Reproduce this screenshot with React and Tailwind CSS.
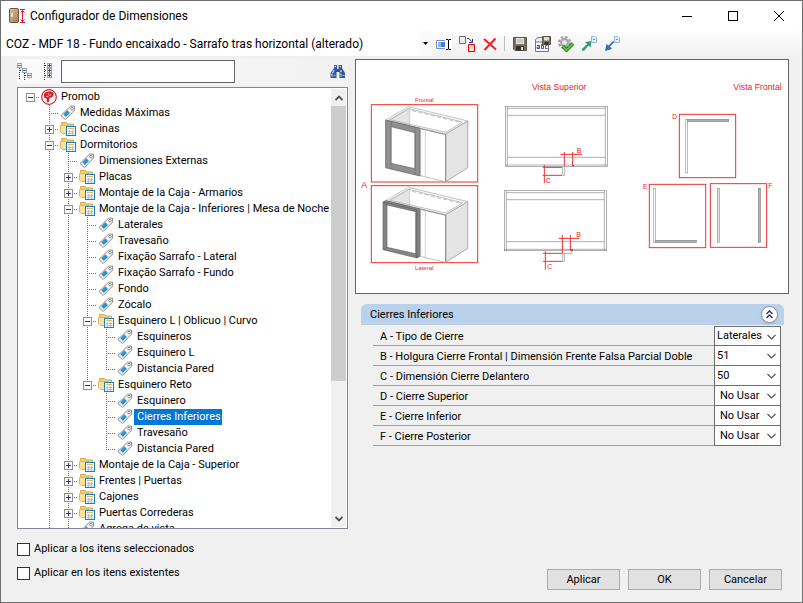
import React, { useState } from 'react'
import clsx from 'clsx'

const leaf = (label) => ({ label })
const folder = (label, children) => ({ label, children: children || [], open: !!children })

const tree = {
  label: 'Promob',
  logo: true,
  open: true,
  children: [
    leaf('Medidas Máximas'),
    folder('Cocinas'),
    folder('Dormitorios', [
      leaf('Dimensiones Externas'),
      folder('Placas'),
      folder('Montaje de la Caja - Armarios'),
      folder('Montaje de la Caja - Inferiores | Mesa de Noche', [
        leaf('Laterales'),
        leaf('Travesaño'),
        leaf('Fixação Sarrafo - Lateral'),
        leaf('Fixação Sarrafo - Fundo'),
        leaf('Fondo'),
        leaf('Zócalo'),
        folder('Esquinero L | Oblicuo | Curvo', [
          leaf('Esquineros'),
          leaf('Esquinero L'),
          leaf('Distancia Pared'),
        ]),
        folder('Esquinero Reto', [
          leaf('Esquinero'),
          leaf('Cierres Inferiores'),
          leaf('Travesaño'),
          leaf('Distancia Pared'),
        ]),
      ]),
      folder('Montaje de la Caja - Superior'),
      folder('Frentes | Puertas'),
      folder('Cajones'),
      folder('Puertas Correderas'),
      leaf('Agrega de vista'),
    ]),
    folder('Baños'),
  ],
}

const fields = [
  { id: 'a', label: 'A - Tipo de Cierre', value: 'Laterales', options: ['Laterales', 'Frontal'] },
  {
    id: 'b',
    label: 'B - Holgura Cierre Frontal | Dimensión Frente Falsa Parcial Doble',
    value: '51',
    options: ['50', '51'],
  },
  { id: 'c', label: 'C - Dimensión Cierre Delantero', value: '50', options: ['50', '51'] },
  { id: 'd', label: 'D - Cierre Superior', value: 'No Usar', options: ['No Usar', 'Usar'] },
  { id: 'e', label: 'E - Cierre Inferior', value: 'No Usar', options: ['No Usar', 'Usar'] },
  { id: 'f', label: 'F - Cierre Posterior', value: 'No Usar', options: ['No Usar', 'Usar'] },
]

// turns the tree into rows; guides says which levels have a line running through
function flatten(node, path = '0', guides = [], last = true) {
  const row = { node, path, guides, last }
  if (!node.open) return [row]
  return [
    row,
    ...node.children.flatMap((child, i) =>
      flatten(child, `${path}.${i}`, [...guides, !last], i === node.children.length - 1)
    ),
  ]
}

export default function App() {
  return (
    <div className="flex h-screen w-full flex-col overflow-hidden border border-[#6e6e6e] bg-[#f0f0f0] font-['Roboto',sans-serif] text-[11px] leading-4 text-black">
      <TitleBar />
      <Toolbar />
      <main className="grid min-h-0 flex-1 grid-cols-[331px_1fr] gap-[7px] pt-[3px] pr-[13px] pl-4">
        <TreePanel />
        <section className="flex min-w-0 flex-col gap-2.5">
          <div className="border border-[#646464] bg-white">
            <Diagram />
          </div>
          <Dimensions />
        </section>
      </main>
      <Footer />
    </div>
  )
}

function TitleBar() {
  return (
    <header className="flex h-[30px] shrink-0 items-center bg-white pl-[7px]">
      <AppIcon />
      <h1 className="ml-1 flex-1 text-[12px]">Configurador de Dimensiones</h1>
      <button aria-label="Minimizar" className="flex h-full w-[46px] items-center justify-center">
        <svg width="10" height="10" stroke="#000" fill="none" shapeRendering="crispEdges">
          <path d="M0 5.5H10" />
        </svg>
      </button>
      <button aria-label="Maximizar" className="flex h-full w-[46px] items-center justify-center">
        <svg width="10" height="10" stroke="#000" fill="none" shapeRendering="crispEdges">
          <path d="M.5 .5H9.5V9.5H.5Z" />
        </svg>
      </button>
      <button aria-label="Cerrar" className="flex h-full w-[46px] items-center justify-center">
        <svg width="10" height="10" stroke="#000" fill="none">
          <path d="M0 0L10 10M10 0L0 10" />
        </svg>
      </button>
    </header>
  )
}

function ToolButton({ label, children }) {
  return (
    <button aria-label={label} className="flex h-full w-[23px] items-center justify-center">
      <svg width="16" height="16" viewBox="0 0 16 16" fill="none">
        {children}
      </svg>
    </button>
  )
}

function Toolbar() {
  return (
    <div className="flex h-[25px] shrink-0 items-center rounded-r bg-linear-to-b from-[#fdfdfd] to-[#f1f1f1]">
      <div className="flex h-full w-[431px] items-center bg-white pl-[5px]">
        <select
          aria-label="Configuración"
          className="h-full min-w-0 flex-1 appearance-none bg-white text-[12px] outline-none"
        >
          <option>COZ - MDF 18 - Fundo encaixado - Sarrafo tras horizontal (alterado)</option>
        </select>
        <span className="flex h-full w-3 items-center justify-center bg-[#fafafa]">
          <svg width="6" height="3" fill="#000">
            <path d="M0 0H5L2.5 3Z" />
          </svg>
        </span>
      </div>
      <ToolButton label="Renombrar">
        <path d="M.5 4.5H12.5V12.5H.5Z" fill="#fff" stroke="#7292bd" />
        <path d="M2 6H9V11H2Z" fill="#3f7be0" />
        <path d="M2 6H5V11H2Z" fill="#8db4f5" />
        <path d="M9 3H16V14H9Z" fill="#fff" />
        <path d="M10 3.5H12L12.5 4L13 3.5H15M12.5 4V13M10 13.5H12L12.5 13L13 13.5H15" stroke="#000" />
      </ToolButton>
      <ToolButton label="Duplicar">
        <path d="M.5 .5H6.5V7.5H.5Z" fill="#eee" stroke="#7c6a6a" />
        <path d="M8 2.5H10L12.5 5.5M13.5 3V6.5H10" stroke="#1c2f7c" />
        <path d="M9.5 8.5H15.5V15.5H9.5Z" fill="#f4dede" stroke="#f00000" />
      </ToolButton>
      <ToolButton label="Eliminar">
        <path d="M2 3L14 13.5M13.5 2.5L2.5 14" stroke="#f22020" strokeWidth="2" />
      </ToolButton>
      <span className="mx-[3px] h-[15px] w-px bg-[#bdbdbd]" />
      <ToolButton label="Guardar">
        <path d="M1.5 1.5H14.5V14.5H3L1.5 13Z" fill="#77715f" stroke="#5a564c" />
        <path d="M4 2H12V8H4Z" fill="#e6e6e6" />
        <path d="M5 4H11M5 6H11" stroke="#aaa" />
        <path d="M4 10H12V14.5H4Z" fill="#33312c" />
        <path d="M9 11H11V14H9Z" fill="#ddd" />
      </ToolButton>
      <ToolButton label="Guardar como">
        <path d="M.5 3.5L3 1.5H8V14.5H.5Z" fill="#eee" stroke="#777" />
        <path d="M.5 6H13.5V15.5H.5Z" fill="#fff" stroke="#777" />
        <path d="M7.5 .5H15.5V8.5H7.5Z" fill="#77715f" stroke="#5a564c" />
        <path d="M9 1H14V4.5H9Z" fill="#ddd" />
        <path d="M9.5 6H13.5V8.5H9.5Z" fill="#33312c" />
        <path d="M2 9.5H4.5V12.5H2V11H4.5M6.5 8V12.5H8.5V9.5H6.5M12.5 9.5H10.5V12.5H12.5" stroke="#3b48e0" />
      </ToolButton>
      <ToolButton label="Validar">
        <circle cx="6.5" cy="6.5" r="5.5" stroke="#999" strokeWidth="2" strokeDasharray="2.5 1.82" />
        <circle cx="6.5" cy="6.5" r="3.5" fill="#e4e4e4" stroke="#a4a4a4" strokeWidth="2" />
        <path d="M4.5 10L8.5 14L15 7.5" stroke="#17701c" strokeWidth="3.6" />
        <path d="M4.5 10L8.5 14L15 7.5" stroke="#5fc43c" strokeWidth="2" />
      </ToolButton>
      <ToolButton label="Exportar">
        <path d="M1 13L6 8L4 6L10.5 5L9.5 11.5L7.5 9.5L3 15L1 14.5Z" fill="#2e9e78" />
        <path d="M10.5 .5H14L15.5 2V6.5H10.5Z" fill="#e2effb" stroke="#8db8df" />
        <path d="M12 3.5H14" stroke="#5d99cf" />
      </ToolButton>
      <ToolButton label="Importar">
        <path d="M10.5 6L6 10.5L8 13L1 15L2.5 8L4.5 9.5L9 5Z" fill="#2c71c8" />
        <path d="M10.5 .5H14L15.5 2V6.5H10.5Z" fill="#e2effb" stroke="#8db8df" />
        <path d="M12 3.5H14" stroke="#5d99cf" />
      </ToolButton>
    </div>
  )
}

function TreePanel() {
  const [selected, setSelected] = useState('0.2.3.7.1')
  const rows = flatten(tree)

  return (
    <section className="flex min-h-0 flex-col gap-[3px]">
      <div className="flex h-[25px] shrink-0 items-center bg-linear-to-r from-[#fbfbfb] to-[#f1f1f1] pr-0.5">
        <button aria-label="Contraer todo" className="w-[26px]">
          <svg width="16" height="17" fill="none" shapeRendering="crispEdges">
            <path d="M2.5 5V17M7.5 10V17M3 7.5H6M8 12.5H11" stroke="#333" strokeDasharray="1 1" />
            <path d="M.5 .5H4.5V4.5H.5ZM5.5 5.5H9.5V9.5H5.5ZM10.5 10.5H14.5V14.5H10.5Z" fill="#fff" stroke="#9aa3b3" />
            <path d="M1 2.5H4M6 7.5H9M11 12.5H14" stroke="#667" />
          </svg>
        </button>
        <button aria-label="Expandir todo" className="w-[18px]">
          <svg width="10" height="17" fill="none" shapeRendering="crispEdges">
            <path d="M1.5 0V17M2 2.5H4M2 7.5H4M2 12.5H4" stroke="#333" strokeDasharray="1 1" />
            <path d="M4.5 .5H8.5V4.5H4.5ZM4.5 5.5H8.5V9.5H4.5ZM4.5 10.5H8.5V14.5H4.5Z" fill="#fff" stroke="#9aa3b3" />
            <path d="M5 2.5H8M5 7.5H8M5 12.5H8M6.5 1V4M6.5 6V9M6.5 11V14" stroke="#445" />
          </svg>
        </button>
        <input
          type="text"
          aria-label="Buscar"
          className="h-[23px] w-[174px] border border-[#646464] bg-white px-1 outline-none"
        />
        <button aria-label="Buscar siguiente" className="ml-auto">
          <svg width="16" height="16" viewBox="0 0 16 16">
            <path d="M4 1H7V5H8.5V1H12V4L15 9V14H9.5V8H6.5V14H.5V9L4 4Z" fill="#34549b" />
            <path d="M4.5 2.5H6M9.5 2.5H11M2 9.5V12.5M11 9.5V12.5M4 6L2.5 9M11 6V8" stroke="#b9cdf0" strokeWidth="1.4" />
            <path d="M1 11.5H6M10 11.5H15" stroke="#7d9cd6" />
          </svg>
        </button>
      </div>

      <div className="flex min-h-0 flex-1 border border-[#828790] bg-white">
        <div role="tree" className="min-w-0 flex-1 overflow-hidden pt-px pl-[3px]">
          {rows.map((row) => (
            <TreeRow
              key={row.path}
              {...row}
              selected={row.path === selected}
              onSelect={() => setSelected(row.path)}
            />
          ))}
        </div>
        <div className="my-px mr-px flex w-[15px] flex-col bg-[#f0f0f0]">
          <span className="flex h-[17px] items-center justify-center">
            <svg width="8" height="6" fill="none" stroke="#505050" strokeWidth="1.8">
              <path d="M.5 5L4 1.5L7.5 5" />
            </svg>
          </span>
          <div className="min-h-0 flex-1">
            <div className="h-[68%] bg-[#cdcdcd]" />
          </div>
          <span className="flex h-[17px] items-center justify-center">
            <svg width="8" height="6" fill="none" stroke="#505050" strokeWidth="1.8">
              <path d="M.5 1L4 4.5L7.5 1" />
            </svg>
          </span>
        </div>
      </div>
    </section>
  )
}

function TreeRow({ node, guides, last, selected, onSelect }) {
  const root = !guides.length

  return (
    <div role="treeitem" aria-selected={selected} className="flex h-4 items-center whitespace-nowrap">
      {guides.map((line, i) => (
        <svg key={i} className="shrink-0" width="19" height="16">
          {line && <path d="M9.5 0V16" stroke="#6c6c6c" strokeDasharray="1 1" />}
        </svg>
      ))}
      <svg className="shrink-0" width="19" height="16" fill="none" shapeRendering="crispEdges">
        {!root && (
          <path d={last ? 'M9.5 0V8' : 'M9.5 0V16'} stroke="#6c6c6c" strokeDasharray="1 1" />
        )}
        <path d="M9 8.5H19" stroke="#6c6c6c" strokeDasharray="1 1" />
        {node.children && (
          <>
            <path d="M5.5 4.5H13.5V12.5H5.5Z" fill="#fafafa" stroke="#919191" />
            <path d={node.open ? 'M7 8.5H12' : 'M7 8.5H12M9.5 6V11'} stroke="#1f3a8a" />
          </>
        )}
      </svg>
      <span className="ml-px shrink-0">
        {node.logo ? <PromobIcon /> : node.children ? <FolderIcon /> : <TagIcon />}
      </span>
      <button
        onClick={onSelect}
        className={clsx('ml-px h-4 pr-px pl-[3px]', selected && 'bg-[#0078d7] text-white')}
      >
        {node.label}
      </button>
    </div>
  )
}

function Dimensions() {
  const [values, setValues] = useState(fields.map((f) => f.value))

  function handleChange(index, value) {
    setValues(values.map((v, i) => (i === index ? value : v)))
  }

  return (
    <div className="mr-[5px] ml-1.5">
      <div className="flex h-[21px] items-center justify-between rounded-t-md bg-[#b9d1ea] pr-1.5 pl-[9px]">
        <h2>Cierres Inferiores</h2>
        <button
          aria-label="Contraer"
          className="flex size-[17px] items-center justify-center rounded-full border border-[#8a95a8] bg-white shadow"
        >
          <svg width="7" height="9" fill="none" stroke="#1d2f6b" strokeWidth="1.4">
            <path d="M.5 4L3.5 1L6.5 4M.5 8L3.5 5L6.5 8" />
          </svg>
        </button>
      </div>
      <div className="mt-px mr-[3px] ml-3">
        {fields.map(({ id, label, options }, i) => {
          const indent = values[i].endsWith('Usar')
          return (
            <div key={id} className="flex h-5 border-b border-[#a0a0a0]">
              <label htmlFor={id} className="flex flex-1 items-center pt-0.5 pl-[7px]">
                {label}
              </label>
              <div
                className={clsx(
                  'relative -mb-px w-[67px] border-x border-b border-[#6e6e6e] bg-white',
                  !i && 'border-t'
                )}
              >
                <select
                  id={id}
                  value={values[i]}
                  onChange={(e) => handleChange(i, e.target.value)}
                  className={clsx(
                    'block h-full w-full appearance-none outline-none',
                    indent ? 'pl-[5px]' : 'pl-0.5'
                  )}
                >
                  {options.map((option) => (
                    <option key={option}>{option}</option>
                  ))}
                </select>
                <svg
                  className="pointer-events-none absolute top-[7px] right-1"
                  width="9"
                  height="6"
                  fill="none"
                  stroke="#555"
                  strokeWidth="1.2"
                >
                  <path d="M.5 1L4.5 5L8.5 1" />
                </svg>
              </div>
            </div>
          )
        })}
      </div>
    </div>
  )
}

function Check({ id, children }) {
  return (
    <div className="flex h-6 items-center gap-1">
      <input
        id={id}
        type="checkbox"
        className="size-[13px] appearance-none border border-[#333] bg-white checked:bg-[#0078d7]"
      />
      <label htmlFor={id}>{children}</label>
    </div>
  )
}

function Footer() {
  return (
    <footer className="flex shrink-0 items-end justify-between pt-2 pr-5 pb-3 pl-4">
      <div className="pb-[5px]">
        <Check id="selected-items">Aplicar a los itens seleccionados</Check>
        <Check id="existing-items">Aplicar en los itens existentes</Check>
      </div>
      <div className="flex gap-2">
        {['Aplicar', 'OK', 'Cancelar'].map((label) => (
          <button key={label} className="h-[21px] w-[73px] border border-[#adadad] bg-[#e1e1e1]">
            {label}
          </button>
        ))}
      </div>
    </footer>
  )
}

function AppIcon() {
  return (
    <svg width="18" height="16" viewBox="0 0 18 16" fill="none">
      <defs>
        <linearGradient id="door" x1="0" y1="0" x2="1" y2="1">
          <stop offset="0" stopColor="#d8c2a4" />
          <stop offset="1" stopColor="#a07a55" />
        </linearGradient>
      </defs>
      <rect x="1.5" y=".5" width="9" height="14" rx="1" fill="url(#door)" stroke="#6d543c" />
      <path d="M4 5V9" stroke="#f2ece2" strokeWidth="1.5" />
      <path d="M12 1.5H17M12 14.5H17M14.5 2V14M12.5 4.5L14.5 2.5L16.5 4.5M12.5 11.5L14.5 13.5L16.5 11.5" stroke="#e0182d" />
    </svg>
  )
}

function PromobIcon() {
  return (
    <svg width="16" height="16" viewBox="0 0 16 16" fill="none">
      <circle cx="8" cy="8" r="7.3" fill="#fff" stroke="#d3222f" strokeWidth="1.2" />
      <path d="M3 5C5 2 9 1.5 12 3.5C13.5 5 12.5 7.5 10.5 8.5L8.5 9L8 13L6 13.5L5.5 9.5L3 8.5Z" fill="#d3222f" />
      <path d="M7 4L8.5 6.5M5 7.5L8 7M10 5L9 7" stroke="#f3b9bd" strokeWidth=".8" />
    </svg>
  )
}

function FolderIcon() {
  return (
    <svg width="16" height="16" viewBox="0 0 16 16" fill="none">
      <path d="M1.5 1.5H6.5L8 3H13.5V11.5H2.5Z" fill="#f3cf74" stroke="#d8a850" />
      <path d="M.5 4.5H10L12.5 12.5H2.5L.5 11Z" fill="#fbe29a" stroke="#e2b560" />
      <rect x="6.5" y="5.5" width="9" height="9" fill="#fff" stroke="#1580bb" />
      <path d="M8 7.5H14" stroke="#f0b84a" />
      <path d="M8 10.5H14M8 12.5H14M9.5 9V14M12.5 9V14" stroke="#a5c5df" />
    </svg>
  )
}

function TagIcon() {
  return (
    <svg width="16" height="16" viewBox="0 0 16 16" fill="none">
      <path d="M1 10.5L10.5 1.2L14.5 1L14.7 5L5.3 14.5Z" fill="#f4f4f4" stroke="#8b8b8b" />
      <path d="M3.3 9.3L7.3 5.3L10 8L5.8 12Z" fill="#2b93cf" />
      <circle cx="12" cy="3.6" r="1.3" fill="#fff" stroke="#777" strokeWidth=".8" />
    </svg>
  )
}

// cabinet previews and technical views, drawn at three units per pixel
function Diagram() {
  return (
    <svg
      viewBox="3 0 1296 699"
      className="block h-auto w-full"
      fill="none"
      fontFamily="Liberation Sans, sans-serif"
      role="img"
      aria-label="Cierres Inferiores"
    >
      <g stroke="#f03030" strokeWidth="3">
        <rect x="49" y="134" width="319" height="232" />
        <rect x="49" y="377" width="319" height="231" />
      </g>
      <Cabinet />
      <g transform="translate(0 242)">
        <Cabinet framed />
      </g>
      <g fill="#ee1c1c">
        <text x="180" y="126" fontSize="18">Frontal</text>
        <text x="180" y="629" fontSize="18">Lateral</text>
        <text x="19" y="384" fontSize="27">A</text>
        <text x="531" y="90" fontSize="26">Vista Superior</text>
        <text x="1135" y="90" fontSize="26">Vista Frontal</text>
        <text x="952" y="177" fontSize="20">D</text>
        <text x="864" y="388" fontSize="20">E</text>
        <text x="1240" y="385" fontSize="20">F</text>
      </g>
      <TopView />
      <g transform="translate(-3 253)">
        <TopView lower />
      </g>
      <g stroke="#f03030" strokeWidth="3">
        <rect x="973" y="163" width="169" height="190" />
        <rect x="883" y="373" width="169" height="190" />
        <rect x="1066" y="371" width="169" height="191" />
      </g>
      <g stroke="#9a9a9a" strokeWidth="2" fill="#fff">
        <rect x="991" y="179" width="7" height="160" />
        <rect x="895" y="385" width="6" height="162" />
        <rect x="1087" y="385" width="6" height="162" fill="#ddd" />
      </g>
      <g stroke="#858585" strokeWidth="2" fill="#b0b0b0">
        <rect x="997" y="178" width="124" height="7" />
        <rect x="901" y="541" width="123" height="6" />
        <rect x="1210" y="385" width="6" height="162" />
      </g>
    </svg>
  )
}

function Cabinet({ framed }) {
  return (
    <g stroke="#a0a0a0" strokeWidth="2" strokeLinejoin="round">
      <path d="M92 180L160 140L338 183L338 323L272 365L92 323Z" fill="#fff" />
      <path d="M92 180L160 140L164 143V196Z" fill="#e4e4e4" stroke="none" />
      <path d="M164 147V196" stroke="#bbb" />
      <path d="M272 222L338 183V323L272 365Z" fill="#e4e4e4" />
      <path d="M104 180L162 146L322 186" />
      <path d="M172 152L318 188" strokeDasharray="12 7" />
      <path d="M92 180L272 222L338 183" />
      <path d="M108 180L272 217L322 187" />
      <path d="M92 181L272 224V365" stroke="#6a6a6a" />
      <path d="M211 209V351M197 205V348" stroke="#bbb" />
      {framed ? (
        <>
          <path d="M84 184L92 180L195 205V347L186 352L84 327Z" fill="#858585" stroke="#666" />
          <path d="M96 193L182 213V339L96 320Z" fill="#fff" stroke="#666" />
          <path d="M84 184L96 193M186 208V352M84 327L96 320M182 339L186 352M84 184L186 208" stroke="#5a5a5a" />
        </>
      ) : (
        <>
          <path d="M92 180L195 205V348L92 323Z" fill="#909090" stroke="#666" />
          <path d="M108 200L180 218V326L108 310Z" fill="#fff" stroke="#666" />
          <path d="M108 184V327M180 201V344" stroke="#707070" />
        </>
      )}
    </g>
  )
}

function TopView({ lower }) {
  return (
    <>
      <g stroke="#8a8a8a" strokeWidth="2">
        <rect x="451" y="139" width="306" height="180" />
        <path d="M457 139V319M751 139V319M457 145H751M457 166H751M457 292H751M451 315H757" />
        <path d={lower ? 'M628 327H653V318M626 327V351H632V327' : 'M622 320V346H629V320'} />
        <path d="M652 317H657" stroke="#444" strokeWidth="4" />
      </g>
      {lower ? (
        <path d="M574 321V376M567 327H625M567 351H625M625 272V327M649 272V319M614 282H676" stroke="#f03030" strokeWidth="3" />
      ) : (
        <path d="M568 315V369M563 322H621M563 346H621M628 276V318M653 276V318M616 283H681" stroke="#f03030" strokeWidth="3" />
      )}
      <g fill="#ee1c1c">
        <text x={lower ? 667 : 665} y={lower ? 279 : 280} fontSize="21">B</text>
        <text x={lower ? 580 : 572} y={lower ? 375 : 369} fontSize="21">C</text>
      </g>
    </>
  )
}
